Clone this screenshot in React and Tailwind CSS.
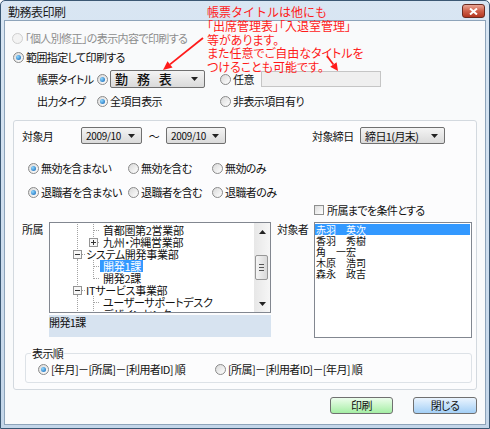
import React from 'react';

const PALT = "[font-feature-settings:'palt']";

function Radio({ checked, disabled, className }) {
  return (
    <span
      className={`inline-flex w-[11px] h-[11px] shrink-0 items-center justify-center rounded-full border ${
        disabled ? 'border-[#cfcfcf] bg-[#f3f3f3]' : 'border-[#8a8a8a] bg-linear-to-br from-[#d9d9d9] to-white'
      } ${className || ''}`}
    >
      {checked && <span className="w-[5px] h-[5px] rounded-full bg-[radial-gradient(circle_at_35%_35%,#8fd8ff,#0a5fb4)]" />}
    </span>
  );
}

function Arrow({ up }) {
  return (
    <svg width="7" height="4" viewBox="0 0 7 4">
      <polygon points={up ? '0,4 7,4 3.5,0' : '0,0 7,0 3.5,4'} fill="#222" />
    </svg>
  );
}

function Combo({ className, children, textClass }) {
  return (
    <div
      className={`h-[17px] shrink-0 flex items-center justify-between pl-[4px] pr-[6px] border border-[#707070] rounded-[2px] bg-linear-to-b from-[#f4f4f4] to-[#dadada] ${className}`}
    >
      <span className={`whitespace-nowrap ${textClass || ''}`}>{children}</span>
      <Arrow />
    </div>
  );
}

function RadioLabel({ checked, children, className, disabled }) {
  return (
    <div className={`flex items-center whitespace-nowrap ${className || ''}`}>
      <Radio checked={checked} disabled={disabled} />
      <span className={`ml-[2px] ${disabled ? 'text-[#8d8d8d]' : ''}`}>{children}</span>
    </div>
  );
}

// dotted tree connectors, drawn per row
function TreeLines({ kind }) {
  const dot = { stroke: '#a3a3a3', strokeWidth: 1, strokeDasharray: '1 1', shapeRendering: 'crispEdges' };
  if (kind === 'root') {
    return (
      <svg width="17" height="12" className="shrink-0">
        <line x1="8.5" y1="0" x2="8.5" y2="2" {...dot} />
        <line x1="8.5" y1="11" x2="8.5" y2="12" {...dot} />
        <rect x="4.5" y="2.5" width="8" height="8" fill="#f7f7f7" stroke="#949494" shapeRendering="crispEdges" />
        <line x1="6" y1="6.5" x2="11" y2="6.5" stroke="#333" shapeRendering="crispEdges" />
        <line x1="13" y1="6.5" x2="17" y2="6.5" {...dot} />
      </svg>
    );
  }
  return (
    <svg width="31" height="12" className="shrink-0">
      <line x1="8.5" y1="0" x2="8.5" y2="12" {...dot} />
      {kind === 'plus' ? (
        <>
          <line x1="24.5" y1="0" x2="24.5" y2="2" {...dot} />
          <rect x="20.5" y="2.5" width="8" height="8" fill="#f7f7f7" stroke="#949494" shapeRendering="crispEdges" />
          <line x1="22" y1="6.5" x2="27" y2="6.5" stroke="#333" shapeRendering="crispEdges" />
          <line x1="24.5" y1="4" x2="24.5" y2="9" stroke="#333" shapeRendering="crispEdges" />
          <line x1="29" y1="6.5" x2="31" y2="6.5" {...dot} />
        </>
      ) : (
        <>
          <line x1="24.5" y1="0" x2="24.5" y2={kind === 'last' ? 7 : 12} {...dot} />
          <line x1="25" y1="6.5" x2="31" y2="6.5" {...dot} />
        </>
      )}
    </svg>
  );
}

const tree = [
  { kind: 'leaf', text: '首都圏第2営業部' },
  { kind: 'plus', text: '九州・沖縄営業部' },
  { kind: 'root', text: 'システム開発事業部' },
  { kind: 'leaf', text: '開発1課', selected: true },
  { kind: 'last', text: '開発2課' },
  { kind: 'root', text: 'ITサービス事業部' },
  { kind: 'leaf', text: 'ユーザーサポートデスク' },
  { kind: 'leaf', text: 'デザインセンター' },
];

const people = ['赤羽　英次', '香羽　秀樹', '角　一宏', '木原　浩司', '森永　政吉'];

export default function App() {
  return (
    <div className="relative w-[490px] h-[429px] flex flex-col border border-[#3b5874] rounded-t-[5px] bg-linear-to-b from-[#d9e6f3] to-[#c4d6e9] text-[11px] leading-[14px] text-[#111] font-['Noto_Sans_CJK_JP','Noto_Sans',sans-serif]">
      {/* title bar */}
      <div className="h-[19px] flex items-start justify-between pl-[7px] pr-[4px] shrink-0">
        <span className={`mt-[4px] text-[12px] leading-[14px] text-[#1b1b1b] tracking-[-0.5px] ${PALT}`}>勤務表印刷</span>
        <button className="mt-[3px] w-[23px] h-[14px] flex items-center justify-center rounded-[3px] border border-[#6b2b20] bg-linear-to-b from-[#e9a696] via-[#cf604a] to-[#b3361f]">
          <svg width="9" height="7" viewBox="0 0 9 7">
            <path d="M1 0.5 L8 6.5 M8 0.5 L1 6.5" stroke="#fff" strokeWidth="2" />
          </svg>
        </button>
      </div>

      {/* client */}
      <div className={`flex-1 mx-[3px] mb-[3px] border border-[#8ea4ba] bg-[#f9fafb] tracking-[-0.6px] ${PALT}`}>
        <div className="mt-[9px] pl-[7px] h-[16px] flex items-center">
          <RadioLabel disabled>「個人別修正」の表示内容で印刷する</RadioLabel>
        </div>
        <div className="mt-[3px] pl-[8px] h-[16px] flex items-center">
          <RadioLabel checked>範囲指定して印刷する</RadioLabel>
        </div>

        <div className="mt-[5px] pl-[32px] h-[18px] flex items-center whitespace-nowrap">
          <span className="w-[60px] shrink-0">帳票タイトル</span>
          <Radio checked />
          <Combo className="ml-[2px] w-[95px] h-[18px]" textClass="text-[13px] font-medium tracking-[3px] [font-feature-settings:normal]">
            勤 務 表
          </Combo>
          <Radio className="ml-[15px]" />
          <span className="ml-[2px]">任意</span>
          <div className="ml-[7px] w-[120px] h-[16px] border border-[#c5c5c5] bg-[#efefef]" />
        </div>
        <div className="mt-[5px] pl-[32px] h-[16px] flex items-center whitespace-nowrap">
          <span className="w-[60px] shrink-0">出力タイプ</span>
          <RadioLabel checked className="w-[123px]">全項目表示</RadioLabel>
          <RadioLabel>非表示項目有り</RadioLabel>
        </div>

        {/* main group */}
        <div className="mt-[11px] ml-[8px] w-[464px] h-[270px] border border-[#d3d9df] rounded-[3px] bg-[#fcfcfd]">
          <div className="pt-[6px] pl-[8px] h-[23px] flex items-center whitespace-nowrap">
            <span className="w-[59px] shrink-0">対象月</span>
            <Combo className="w-[61px]" textClass="text-[10px] tracking-[-0.3px]">2009/10</Combo>
            <span className="w-[24px] text-center">～</span>
            <Combo className="w-[60px]" textClass="text-[10px] tracking-[-0.3px]">2009/10</Combo>
            <span className="ml-[86px] w-[48px] shrink-0">対象締日</span>
            <Combo className="w-[85px]">締日1(月末)</Combo>
          </div>

          <div className="mt-[16px] pl-[14px] h-[16px] flex items-center">
            <RadioLabel checked className="w-[100px]">無効を含まない</RadioLabel>
            <RadioLabel className="w-[84px]">無効を含む</RadioLabel>
            <RadioLabel>無効のみ</RadioLabel>
          </div>
          <div className="mt-[8px] pl-[14px] h-[16px] flex items-center">
            <RadioLabel checked className="w-[100px]">退職者を含まない</RadioLabel>
            <RadioLabel className="w-[84px]">退職者を含む</RadioLabel>
            <RadioLabel>退職者のみ</RadioLabel>
          </div>

          <div className="mt-[3px] pl-[300px] h-[14px] flex items-center">
            <span className="w-[10px] h-[10px] border border-[#8e8f8f] bg-linear-to-br from-[#dcdcdc] to-white" />
            <span className="ml-[3px]">所属までを条件とする</span>
          </div>

          <div className="mt-[5px] flex items-start">
            <span className="pl-[8px] w-[35px] shrink-0">所属</span>
            <div className="w-[222px] shrink-0">
              <div className="h-[91px] flex border border-[#828790] bg-white overflow-hidden">
                <div className="flex-1 pl-[19px] pt-[1px] overflow-hidden text-[11px] leading-[12px] tracking-[-0.3px]">
                  {tree.map((n, i) => (
                    <div key={i} className="h-[12px] flex items-center whitespace-nowrap">
                      <TreeLines kind={n.kind} />
                      <span
                        className={`${n.kind === 'root' ? '' : 'pl-[3px] pr-[2px]'} ${
                          n.selected ? 'bg-[#3399ff] text-white' : ''
                        }`}
                      >
                        {n.text}
                      </span>
                    </div>
                  ))}
                </div>
                <div className="w-[16px] shrink-0 flex flex-col bg-linear-to-r from-[#e7e7e7] to-[#f6f6f6]">
                  <div className="h-[17px] flex items-center justify-center">
                    <Arrow up />
                  </div>
                  <div className="flex-1">
                    <div className="mt-[15px] ml-[1px] w-[13px] h-[25px] flex flex-col items-center justify-center gap-[2px] border border-[#979797] rounded-[2px] bg-linear-to-r from-[#f5f5f5] to-[#d9d9d9]">
                      <span className="w-[5px] h-px bg-[#555]" />
                      <span className="w-[5px] h-px bg-[#555]" />
                      <span className="w-[5px] h-px bg-[#555]" />
                    </div>
                  </div>
                  <div className="h-[17px] flex items-center justify-center">
                    <Arrow />
                  </div>
                </div>
              </div>
              <div className="mt-[2px] h-[22px] bg-[#d7e3f0] pt-[1px] leading-[13px]">開発1課</div>
            </div>
            <span className="pl-[6px] w-[43px] shrink-0">対象者</span>
            <div className="w-[158px] h-[116px] shrink-0 border border-[#828790] bg-white pt-[1px] text-[10px] leading-[11px] tracking-normal [font-feature-settings:normal]">
              {people.map((p, i) => (
                <div key={i} className={`h-[11px] mr-[1px] pl-[1px] ${i === 0 ? 'bg-[#3399ff] text-white' : ''}`}>
                  {p}
                </div>
              ))}
            </div>
          </div>

          <div className="relative mt-[15px] ml-[11px] w-[447px] h-[30px] border border-[#dde2e7] rounded-[3px] flex items-center pl-[12px] pt-[2px]">
            <span className="absolute left-[5px] top-[-8px] px-[1px] bg-[#fcfcfd] leading-[14px]">表示順</span>
            <RadioLabel checked className="w-[177px]">[年月]－[所属]－[利用者ID] 順</RadioLabel>
            <RadioLabel>[所属]－[利用者ID]－[年月] 順</RadioLabel>
          </div>
        </div>

        <div className="mt-[7px] pr-[8px] flex justify-end gap-[20px]">
          <button className="w-[63px] h-[17px] border border-[#707070] rounded-[3px] bg-linear-to-b from-[#ecfdec] to-[#a4eea4] leading-[15px]">印刷</button>
          <button className="w-[64px] h-[17px] border border-[#707070] rounded-[3px] bg-linear-to-b from-[#eaf4fe] to-[#a3cff6] leading-[15px]">閉じる</button>
        </div>
      </div>

      {/* red annotation */}
      <div className="absolute left-[206px] top-[4px] text-[12px] leading-[13.75px] text-[#ff1a1a]">
        <div>帳票タイトルは他にも</div>
        <div className={PALT}>「出席管理表」「入退室管理」</div>
        <div className={PALT}>等があります。</div>
        <div className={PALT}>また任意でご自由なタイトルを</div>
        <div className={PALT}>つけることも可能です。</div>
      </div>
      <svg className="absolute left-[-1px] top-[-1px] pointer-events-none" width="490" height="429">
        <line x1="203" y1="38" x2="170" y2="64.4" stroke="#ff1a1a" strokeWidth="1.8" />
        <polygon points="163,70 172.5,67.5 167.5,61.3" fill="#ff1a1a" />
        <line x1="327" y1="56" x2="333.4" y2="64.5" stroke="#ff1a1a" strokeWidth="1.8" />
        <polygon points="338,71 336.6,62.2 330.2,66.8" fill="#ff1a1a" />
      </svg>
    </div>
  );
}
